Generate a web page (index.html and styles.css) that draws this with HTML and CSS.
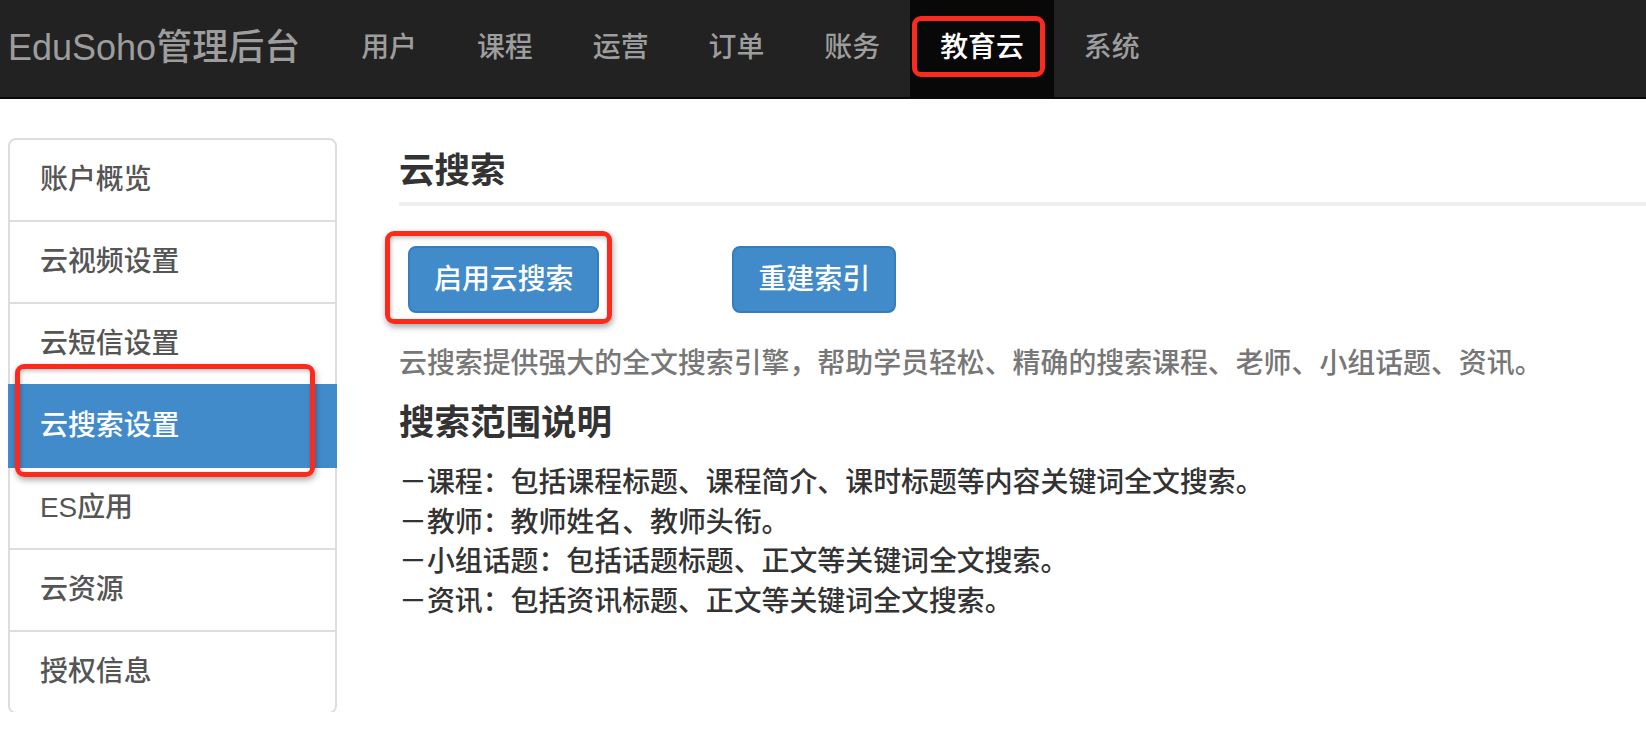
FILE: index.html
```html
<!DOCTYPE html>
<html lang="zh-CN">
<head>
  <meta charset="UTF-8" />
  <title>EduSoho管理后台 - 云搜索设置</title>
  <link rel="stylesheet" href="styles.css">
</head>
<body>

  <div class="navbar">
    <a class="brand" href="#">EduSoho管理后台</a>
    <ul class="nav">
      <li class="nav-item">用户</li>
      <li class="nav-item">课程</li>
      <li class="nav-item">运营</li>
      <li class="nav-item">订单</li>
      <li class="nav-item">账务</li>
      <li class="nav-item active">教育云<span class="mark mark-nav"></span></li>
      <li class="nav-item">系统</li>
    </ul>
  </div>

  <div class="layout">
    <!-- Left menu -->
    <div class="sidebar">
      <a class="side-item" href="#">账户概览</a>
      <a class="side-item" href="#">云视频设置</a>
      <a class="side-item" href="#">云短信设置</a>
      <a class="side-item active" href="#">云搜索设置<span class="mark mark-side"></span></a>
      <a class="side-item" href="#">ES应用</a>
      <a class="side-item" href="#">云资源</a>
      <a class="side-item" href="#">授权信息</a>
    </div>

    <!-- Content -->
    <div class="main">
      <h1 class="page-title">云搜索</h1>

      <div class="btn-row">
        <button class="btn">启用云搜索<span class="mark mark-btn"></span></button>
        <button class="btn">重建索引</button>
      </div>

      <p class="desc">云搜索提供强大的全文搜索引擎，帮助学员轻松、精确的搜索课程、老师、小组话题、资讯。</p>

      <h2 class="section-title">搜索范围说明</h2>
      <ul class="scope-list">
        <li>－课程：包括课程标题、课程简介、课时标题等内容关键词全文搜索。</li>
        <li>－教师：教师姓名、教师头衔。</li>
        <li>－小组话题：包括话题标题、正文等关键词全文搜索。</li>
        <li>－资讯：包括资讯标题、正文等关键词全文搜索。</li>
      </ul>
    </div>
  </div>

</body>
</html>
```

FILE: styles.css
```css
body {
  margin: 0;
  font-family: "Liberation Sans", "Noto Sans CJK SC", sans-serif;
  font-size: 27.9px;
  font-weight: 500;
  color: #333;
  background-color: #fff;
}

/* Top bar */
.navbar {
  display: flex;
  height: 96.7px;
  background-color: #222;
  border-bottom: 2px solid #080808;
}

.brand {
  padding: 0 31px 0 8px;
  font-size: 36px;
  line-height: 96.7px;
  color: #9d9d9d;
  text-decoration: none;
}

.nav {
  display: flex;
  margin: 0;
  padding: 0;
  list-style: none;
}

.nav-item {
  padding: 0 30px;
  line-height: 96.7px;
  color: #9d9d9d;
}

.nav-item.active {
  position: relative;
  color: #fff;
  background-color: #080808;
}

/* Red annotation boxes */
.mark {
  position: absolute;
  box-sizing: border-box;
  border: 5px solid #fc2a1c;
  border-radius: 9px;
  box-shadow: 1px 3px 6px rgba(0, 0, 0, 0.35), inset 1px 2px 4px rgba(0, 0, 0, 0.25);
  pointer-events: none;
}

.mark-nav {
  left: 2px;
  top: 16px;
  width: 133px;
  height: 61px;
  box-shadow: none;
}

.mark-side {
  left: 5px;
  top: -22px;
  width: 300px;
  height: 113px;
}

.mark-btn {
  left: -25px;
  top: -17px;
  width: 227px;
  height: 93px;
}

/* Page layout */
.layout {
  display: flex;
  gap: 62px;
  padding: 39.3px 0 0 8px;
}

.sidebar {
  width: 329px;
  flex-shrink: 0;
}

.side-item {
  position: relative;
  display: block;
  padding: 20px 30px;
  margin-bottom: -2px;
  line-height: 40px;
  color: #555;
  text-decoration: none;
  background-color: #fff;
  border: 2px solid #ddd;
}

.side-item:first-child {
  border-radius: 8px 8px 0 0;
}

.side-item:last-child {
  border-radius: 0 0 8px 8px;
}

.side-item.active {
  z-index: 2;
  color: #fff;
  background-color: #428bca;
  border-color: #428bca;
}

.main {
  flex: 1;
}

.page-title {
  margin: 14.5px 0 0;
  padding-bottom: 10.5px;
  font-size: 35.5px;
  line-height: 39px;
  font-weight: 700;
  color: #333;
  border-bottom: 4px solid #eee;
}

.btn-row {
  display: flex;
  gap: 133px;
  margin-top: 40px;
  padding-left: 9px;
}

.btn {
  position: relative;
  padding: 12px 24px;
  font-family: inherit;
  font-size: 27.9px;
  font-weight: 500;
  line-height: 39.4px;
  color: #fff;
  background-color: #428bca;
  border: 2px solid #357ebd;
  border-radius: 8px;
  cursor: pointer;
}

.desc {
  margin: 30.9px 0 0;
  line-height: 39.4px;
  color: #777;
}

.section-title {
  margin: 20.8px 0 0;
  font-size: 35.5px;
  line-height: 39px;
  font-weight: 700;
  color: #333;
}

.scope-list {
  margin: 19.8px 0 0;
  padding: 0;
  list-style: none;
}

.scope-list li {
  line-height: 39.5px;
}
```
